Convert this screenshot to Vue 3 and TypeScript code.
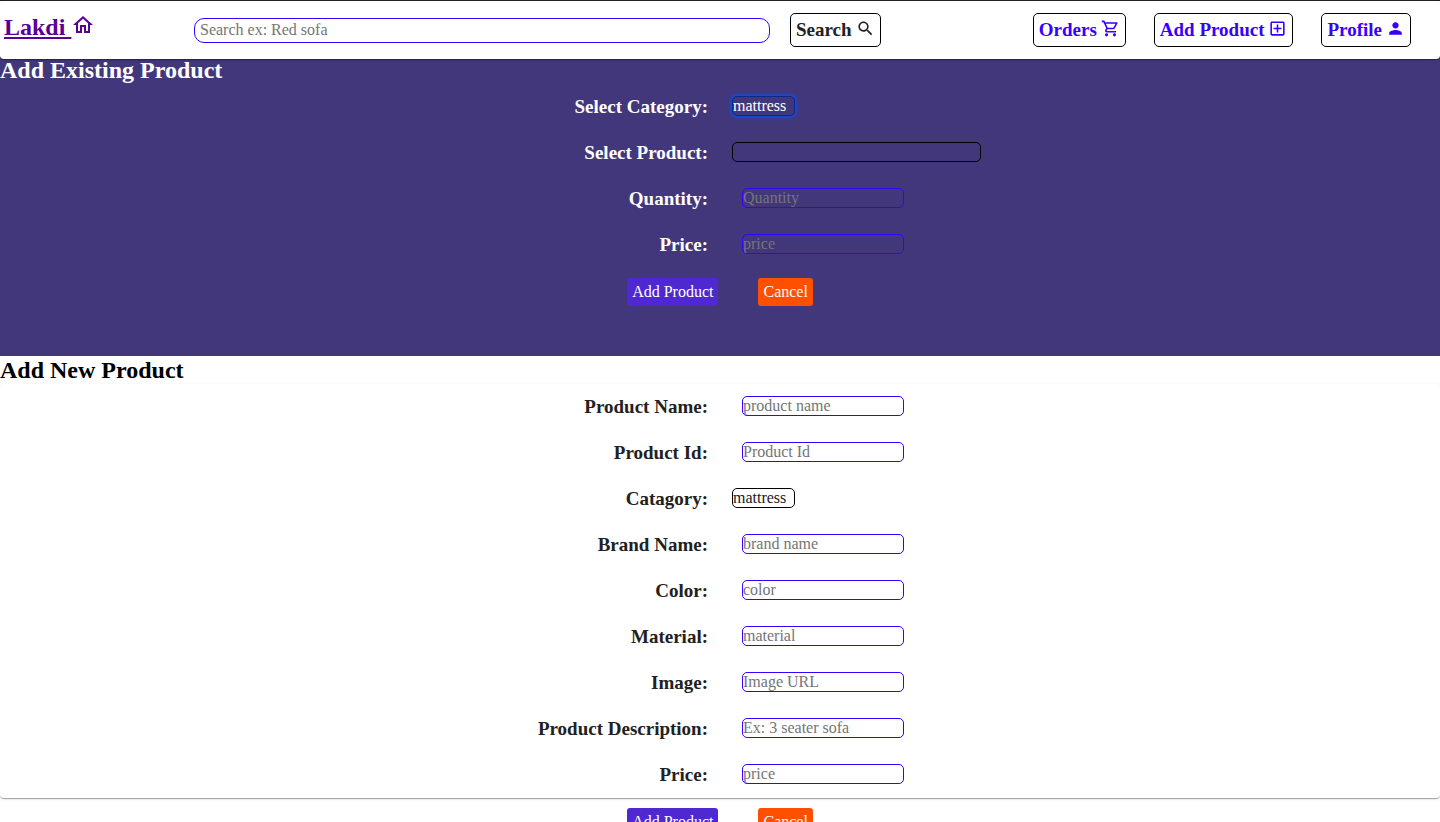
<script setup lang="ts">
import { onMounted, ref } from 'vue'

interface Field {
  id: string
  label: string
  kind: 'text' | 'select'
  placeholder?: string
}

const categories: string[] = ['mattress', 'sofa', 'bed', 'table']
const categorySelect = ref<HTMLSelectElement | null>(null)
const query = ref('')
const category = ref('mattress')
const product = ref('')

const newFields: Field[] = [
  { id: 'new-name', label: 'Product Name:', kind: 'text', placeholder: 'product name' },
  { id: 'new-id', label: 'Product Id:', kind: 'text', placeholder: 'Product Id' },
  { id: 'new-category', label: 'Catagory:', kind: 'select' },
  { id: 'new-brand', label: 'Brand Name:', kind: 'text', placeholder: 'brand name' },
  { id: 'new-color', label: 'Color:', kind: 'text', placeholder: 'color' },
  { id: 'new-material', label: 'Material:', kind: 'text', placeholder: 'material' },
  { id: 'new-image', label: 'Image:', kind: 'text', placeholder: 'Image URL' },
  { id: 'new-description', label: 'Product Description:', kind: 'text', placeholder: 'Ex: 3 seater sofa' },
  { id: 'new-price', label: 'Price:', kind: 'text', placeholder: 'price' },
]

onMounted(() => categorySelect.value?.focus({ preventScroll: true }))
</script>

<template>
  <div class="page">
    <header class="navbar">
      <div class="brand">
        <a class="logo" href="#">Lakdi&nbsp;</a>
        <svg class="home-icon" viewBox="0 0 24 24" aria-hidden="true">
          <path d="M12 5.69l5 4.5V18h-2v-6H9v6H7v-7.81l5-4.5M12 3L2 12h3v8h6v-6h2v6h6v-8h3L12 3z" />
        </svg>
      </div>
      <form class="search" @submit.prevent>
        <input v-model="query" class="search-input" type="text" aria-label="Search" placeholder="Search ex: Red sofa" />
        <button class="nav-button dark" type="submit">
          Search
          <svg class="icon" viewBox="0 0 24 24" aria-hidden="true">
            <path d="M15.5 14h-.79l-.28-.27C15.41 12.59 16 11.11 16 9.5 16 5.91 13.09 3 9.5 3S3 5.91 3 9.5 5.91 16 9.5 16c1.61 0 3.09-.59 4.23-1.57l.27.28v.79l5 4.99L20.49 19l-4.99-5zm-6 0C7.01 14 5 11.99 5 9.5S7.01 5 9.5 5 14 7.01 14 9.5 11.99 14 9.5 14z" />
          </svg>
        </button>
      </form>
      <nav class="links">
        <a class="nav-button" href="#">
          Orders
          <svg class="icon" viewBox="0 0 24 24" aria-hidden="true">
            <path d="M15.55 13c.75 0 1.41-.41 1.75-1.03l3.58-6.49c.37-.66-.11-1.48-.87-1.48H5.21l-.94-2H1v2h2l3.6 7.59-1.35 2.44C4.52 15.37 5.48 17 7 17h12v-2H7l1.1-2h7.45zM6.16 6h12.15l-2.76 5H8.53L6.16 6zM7 18c-1.1 0-1.99.9-1.99 2S5.9 22 7 22s2-.9 2-2-.9-2-2-2zm10 0c-1.1 0-1.99.9-1.99 2s.89 2 1.99 2 2-.9 2-2-.9-2-2-2z" />
          </svg>
        </a>
        <a class="nav-button" href="#">
          Add Product
          <svg class="icon" viewBox="0 0 24 24" aria-hidden="true">
            <path d="M19 3H5c-1.11 0-2 .9-2 2v14c0 1.1.89 2 2 2h14c1.1 0 2-.9 2-2V5c0-1.1-.9-2-2-2zm0 16H5V5h14v14zm-8-2h2v-4h4v-2h-4V7h-2v4H7v2h4z" />
          </svg>
        </a>
        <a class="nav-button" href="#">
          Profile
          <svg class="icon" viewBox="0 0 24 24" aria-hidden="true">
            <path d="M12 12c2.21 0 4-1.79 4-4s-1.79-4-4-4-4 1.79-4 4 1.79 4 4 4zm0 2c-2.67 0-8 1.34-8 4v2h16v-2c0-2.66-5.33-4-8-4z" />
          </svg>
        </a>
      </nav>
    </header>

    <form class="existing" @submit.prevent>
      <h2 class="title">Add Existing Product</h2>
      <div class="fields">
        <div class="row">
          <label for="category">Select Category:</label>
          <select id="category" ref="categorySelect" v-model="category" class="select">
            <option v-for="item in categories" :key="item">{{ item }}</option>
          </select>
        </div>
        <div class="row">
          <label for="product">Select Product:</label>
          <select id="product" v-model="product" class="select wide">
            <option value=""></option>
          </select>
        </div>
        <div class="row">
          <label for="quantity">Quantity:</label>
          <input id="quantity" class="text" type="text" placeholder="Quantity" />
        </div>
        <div class="row">
          <label for="price">Price:</label>
          <input id="price" class="text" type="text" placeholder="price" />
        </div>
      </div>
      <div class="actions">
        <button class="action" type="submit">Add Product</button>
        <button class="action cancel" type="button">Cancel</button>
      </div>
    </form>

    <form class="new" @submit.prevent>
      <h2 class="title">Add New Product</h2>
      <div class="fields card">
        <div v-for="field in newFields" :key="field.id" class="row">
          <label :for="field.id">{{ field.label }}</label>
          <select v-if="field.kind === 'select'" :id="field.id" class="select">
            <option v-for="item in categories" :key="item">{{ item }}</option>
          </select>
          <input v-else :id="field.id" class="text" type="text" :placeholder="field.placeholder" />
        </div>
      </div>
      <div class="actions">
        <button class="action" type="submit">Add Product</button>
        <button class="action cancel" type="button">Cancel</button>
      </div>
    </form>
  </div>
</template>

<style>
html {
  scrollbar-width: none;
}

body {
  margin: 0;
  background: #fff;
}
</style>

<style scoped>
.page,
.page * {
  box-sizing: border-box;
}

.page {
  border-top: 1px solid #212121;
  font-family: "Liberation Serif", "Times New Roman", serif;
  font-size: 16px;
  color: #212121;
}

.navbar {
  position: relative;
  z-index: 1;
  display: flex;
  align-items: center;
  height: 58px;
  margin-bottom: -3px;
  padding: 0 29px 0 4px;
  border-radius: 4px;
  background: #fff;
  box-shadow: 0 2px 1px -1px rgba(0, 0, 0, 0.2), 0 1px 1px rgba(0, 0, 0, 0.14), 0 1px 3px rgba(0, 0, 0, 0.12);
}

.brand {
  display: flex;
  align-items: flex-start;
  width: 190px;
  padding-bottom: 6px;
  color: #5a0096;
}

.logo {
  color: inherit;
  font-size: 24px;
  font-weight: 700;
  line-height: 28px;
}

.home-icon {
  width: 24px;
  height: 24px;
  fill: currentColor;
}

.search {
  display: flex;
  align-items: center;
  gap: 20px;
}

.search-input {
  width: 40vw;
  height: 25px;
  padding: 0 5px;
  border: 1px solid #3700ff;
  border-radius: 10px;
  outline: none;
  background: #fff;
  font: inherit;
}

.links {
  display: flex;
  gap: 28px;
  margin-left: auto;
}

.nav-button {
  display: flex;
  align-items: center;
  gap: 4px;
  height: 34px;
  padding: 0 5px;
  border: 1px solid #000;
  border-radius: 5px;
  background: #fff;
  color: #3700ff;
  font-family: inherit;
  font-size: 19px;
  font-weight: 700;
  text-decoration: none;
  white-space: nowrap;
}

.nav-button.dark {
  color: #212121;
}

.icon {
  width: 19px;
  height: 19px;
  margin-bottom: 3px;
  fill: currentColor;
}

.existing {
  min-height: 300px;
  background: #43377c;
  color: #fff;
}

.title {
  margin: 0;
  font-size: 24px;
  line-height: 28px;
}

.new .title {
  color: #000;
}

.card {
  border-radius: 4px;
  box-shadow: 0 2px 1px -1px rgba(0, 0, 0, 0.2), 0 1px 1px rgba(0, 0, 0, 0.14), 0 1px 3px rgba(0, 0, 0, 0.12);
}

.row {
  display: grid;
  grid-template-columns: 1fr 1fr;
  gap: 24px;
  height: 46px;
  padding-top: 12px;
}

.row label {
  font-size: 19px;
  font-weight: 700;
  line-height: 22px;
  text-align: right;
}

.select,
.text {
  height: 20px;
  padding: 0;
  border: 1px solid #000;
  border-radius: 5px;
  background: transparent;
  color: inherit;
  font: inherit;
}

.select {
  appearance: none;
  width: 63px;
  padding-bottom: 2px;
}

.select:focus {
  border-color: #062a8c;
  outline: none;
  box-shadow: 0 0 2px 2px #1a49d0;
}

.select.wide {
  width: 249px;
}

.text {
  width: 162px;
  margin-left: 10px;
  border-color: #3700ff;
}

.text::placeholder,
.search-input::placeholder {
  color: #757575;
}

.actions {
  display: flex;
  justify-content: center;
  gap: 40px;
  padding-top: 10px;
}

.action {
  height: 28px;
  padding: 0 5px;
  border: 0;
  border-radius: 3px;
  background: #5028d2;
  color: #fff;
  font: inherit;
}

.action.cancel {
  background: #ff4f00;
}
</style>
